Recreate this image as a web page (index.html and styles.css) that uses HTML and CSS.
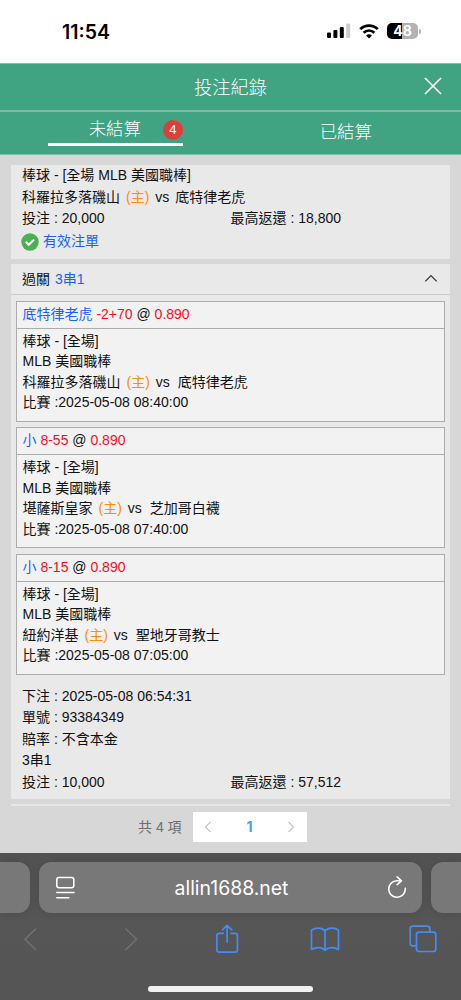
FILE: index.html
```html
<!DOCTYPE html>
<html lang="zh-Hant">
<head>
    <meta charset="UTF-8">
    <meta name="viewport" content="width=device-width, initial-scale=1.0">
    <title>投注紀錄</title>
    <link rel="stylesheet" href="styles.css">
</head>
<body>
    <!-- Phone status bar -->
    <div class="status-bar">
        <span class="clock">11:54</span>
        <div class="status-icons">
            <svg class="signal" width="24" height="16" viewBox="0 0 24 16">
                <rect x="0" y="9.5" width="4" height="5.5" rx="1"/>
                <rect x="6.4" y="7" width="4" height="8" rx="1"/>
                <rect x="12.8" y="4" width="4" height="11" rx="1"/>
                <rect x="19.2" y="0.5" width="4" height="14.5" rx="1" fill="#ccc"/>
            </svg>
            <svg class="wifi" width="20" height="15" viewBox="0 0 20 15">
                <path d="M1.2 5.1a12.7 12.7 0 0 1 17.6 0" fill="none" stroke="#000" stroke-width="2.7"/>
                <path d="M4.6 8.7a7.8 7.8 0 0 1 10.8 0" fill="none" stroke="#000" stroke-width="2.6"/>
                <path d="M10 14.6l-3-3a4.3 4.3 0 0 1 6 0z"/>
            </svg>
            <div class="battery">48</div>
            <span class="battery-cap"></span>
        </div>
    </div>

    <!-- Title -->
    <header class="title-bar">
        <h1>投注紀錄</h1>
        <svg class="close" width="18" height="18" viewBox="0 0 18 18">
            <path d="M1 1l16 16M17 1L1 17" fill="none" stroke="#fff" stroke-width="1.7"/>
        </svg>
    </header>

    <!-- Tabs -->
    <nav class="tabs">
        <div class="tab">
            <div class="tab-active">未結算<span class="badge">4</span></div>
        </div>
        <div class="tab">已結算</div>
    </nav>

    <main class="content">
        <!-- First bet -->
        <section class="card card-first">
            <p class="row">棒球 - [全場 MLB 美國職棒]</p>
            <p class="row">科羅拉多落磯山<span class="home">(主)</span>vs<span class="away">底特律老虎</span></p>
            <div class="row amounts"><span>投注 : 20,000</span><span>最高返還 : 18,800</span></div>
            <div class="row valid">
                <svg width="18" height="18" viewBox="0 0 18 18">
                    <circle cx="9" cy="9" r="8.7" fill="#4caf50"/>
                    <path d="M4.8 8.8l3 3 5.3-5.3" fill="none" stroke="#fff" stroke-width="2"/>
                </svg>
                <span>有效注單</span>
            </div>
        </section>

        <!-- Parlay bet -->
        <section class="card">
            <div class="card-head">
                <span>過關<span class="parlay">3串1</span></span>
                <svg width="14" height="9" viewBox="0 0 14 9">
                    <path d="M1.3 7.3L7 1.5l5.700 5.800" fill="none" stroke="#333" stroke-width="1.2"/>
                </svg>
            </div>
            <div class="legs">
                <article class="leg">
                    <div class="leg-pick"><span class="blue">底特律老虎</span> <span class="red">-2+70</span> @ <span class="red">0.890</span></div>
                    <div class="leg-body">
                        <p>棒球 - [全場]</p>
                        <p>MLB 美國職棒</p>
                        <p>科羅拉多落磯山<span class="home">(主)</span>vs<span class="away">底特律老虎</span></p>
                        <p>比賽 :2025-05-08 08:40:00</p>
                    </div>
                </article>
                <article class="leg">
                    <div class="leg-pick"><span class="blue">小</span> <span class="red">8-55</span> @ <span class="red">0.890</span></div>
                    <div class="leg-body">
                        <p>棒球 - [全場]</p>
                        <p>MLB 美國職棒</p>
                        <p>堪薩斯皇家<span class="home">(主)</span>vs<span class="away">芝加哥白襪</span></p>
                        <p>比賽 :2025-05-08 07:40:00</p>
                    </div>
                </article>
                <article class="leg">
                    <div class="leg-pick"><span class="blue">小</span> <span class="red">8-15</span> @ <span class="red">0.890</span></div>
                    <div class="leg-body">
                        <p>棒球 - [全場]</p>
                        <p>MLB 美國職棒</p>
                        <p>紐約洋基<span class="home">(主)</span>vs<span class="away">聖地牙哥教士</span></p>
                        <p>比賽 :2025-05-08 07:05:00</p>
                    </div>
                </article>
            </div>
            <div class="summary">
                <p class="row">下注 : 2025-05-08 06:54:31</p>
                <p class="row">單號 : 93384349</p>
                <p class="row">賠率 : 不含本金</p>
                <p class="row">3串1</p>
                <div class="row amounts"><span>投注 : 10,000</span><span>最高返還 : 57,512</span></div>
            </div>
        </section>

        <!-- Pagination -->
        <div class="pagination">
            <span class="total">共 4 項</span>
            <div class="pager">
                <svg width="8" height="12" viewBox="0 0 8 12"><path d="M6.5 1L1.5 6l5 5" fill="none" stroke="#c4c6cc" stroke-width="1.2"/></svg>
                <span class="page">1</span>
                <svg width="8" height="12" viewBox="0 0 8 12"><path d="M1.5 1l5 5-5 5" fill="none" stroke="#c4c6cc" stroke-width="1.2"/></svg>
            </div>
        </div>
    </main>

    <!-- Browser bar -->
    <footer class="browser">
        <div class="address-row">
            <div class="side-tab side-left"></div>
            <div class="address">
                <svg width="20" height="24" viewBox="0 0 20 24" fill="none" stroke="#fff" stroke-width="1.6" stroke-linecap="round">
                    <rect x="0.8" y="1.5" width="17" height="10.2" rx="2.2"/>
                    <path d="M.8 16.500h17.200M.8 21.700h12"/>
                </svg>
                <span>allin1688.net</span>
                <svg width="20" height="24" viewBox="0 0 20 24" fill="none" stroke="#fff" stroke-width="1.6" stroke-linecap="round" stroke-linejoin="round">
                    <path d="M18.300 12.400A8.300 8.300 0 1 1 10 4.700H14"/>
                    <path d="M10.200 .9l4.200 3.900-4.200 3.900"/>
                </svg>
            </div>
            <div class="side-tab side-right"></div>
        </div>
        <div class="toolbar">
            <svg width="28" height="30" viewBox="0 0 28 30" fill="none" stroke="#717171" stroke-width="1.6"><path d="M19 4.500L8 15.200 19 26"/></svg>
            <svg width="28" height="30" viewBox="0 0 28 30" fill="none" stroke="#717171" stroke-width="1.6"><path d="M10.500 4.500l11 10.700L10.500 26"/></svg>
            <svg width="28" height="30" viewBox="0 0 28 30" fill="none" stroke="#448cf4" stroke-width="1.7" stroke-linecap="round" stroke-linejoin="round">
                <path d="M11.200 9.300H7.200A2.400 2.400 0 0 0 4.800 11.700V25.700a2.400 2.400 0 0 0 2.400 2.400h15.800a2.400 2.400 0 0 0 2.400-2.400V11.700a2.400 2.400 0 0 0-2.400-2.400H19"/>
                <path d="M15.100 18V1.500M10.400 5.900l4.700-4.500 4.700 4.500"/>
            </svg>
            <svg width="30" height="30" viewBox="0 0 30 30" fill="none" stroke="#448cf4" stroke-width="1.7" stroke-linejoin="round">
                <path d="M15 6.700C12 3.300 5 3.300 1.500 6.200V25.500c4-2.600 10-2.600 13.500.6 3.500-3.200 9.500-3.200 13.500-.6V6.200C25 3.300 18 3.300 15 6.700z"/>
                <path d="M15 6.500v20"/>
            </svg>
            <svg width="28" height="30" viewBox="0 0 28 30" fill="none" stroke="#448cf4" stroke-width="1.7">
                <path d="M7.500 21.800H3.600A2.400 2.400 0 0 1 1.200 19.400V4.600A2.400 2.400 0 0 1 3.600 2.200H18.400A2.400 2.400 0 0 1 20.800 4.600V8"/>
                <rect x="7.500" y="8.200" width="19.300" height="19.300" rx="2.400"/>
            </svg>
        </div>
        <div class="home-indicator"></div>
    </footer>
</body>
</html>
```
FILE: styles.css
```css
* {
    box-sizing: border-box;
}

body {
    margin: 0;
    height: 1000px;
    display: flex;
    flex-direction: column;
    overflow: hidden;
    background-color: #d7d7d7;
    color: #111;
    font-family: "Liberation Sans", "Noto Sans CJK TC", sans-serif;
    font-size: 14px;
}

p, h1 {
    margin: 0;
}

svg {
    display: block;
    flex: none;
}

/* Status bar */
.status-bar {
    height: 63px;
    flex: none;
    display: flex;
    justify-content: space-between;
    align-items: center;
    padding: 0 40px 0 62px;
    background-color: #fff;
}

.clock {
    font-family: Inter, sans-serif;
    font-size: 19.5px;
    font-weight: 600;
    color: #000;
}

.status-icons {
    display: flex;
    align-items: center;
    padding-bottom: 1px;
}

.wifi {
    margin-left: 8px;
}

.battery {
    width: 31px;
    height: 16px;
    margin-left: 8px;
    border-radius: 5px;
    background: linear-gradient(to right, #000 48%, #b3b3b3 48%);
    color: #fff;
    font-family: Inter, sans-serif;
    font-size: 14px;
    font-weight: 700;
    line-height: 16px;
    text-align: center;
}

.battery-cap {
    width: 2px;
    height: 5px;
    margin-left: 1px;
    border-radius: 0 2px 2px 0;
    background-color: #b3b3b3;
}

/* Title */
.title-bar {
    position: relative;
    height: 49px;
    flex: none;
    display: flex;
    justify-content: center;
    align-items: center;
    padding-bottom: 2px;
    border-top: 1px solid #8dbfac;
    border-bottom: 2px solid #83b9a5;
    background-color: #40a382;
}

.title-bar h1 {
    color: #fff;
    font-size: 18.2px;
    font-weight: 300;
}

.close {
    position: absolute;
    right: 19px;
    top: 13px;
}

/* Tabs */
.tabs {
    height: 43px;
    flex: none;
    display: flex;
    border-bottom: 1px solid #83bda7;
    background-color: #40a382;
    color: #fff;
    font-size: 17.4px;
    font-weight: 300;
}

.tab {
    flex: 1;
    display: flex;
    justify-content: center;
    line-height: 40px;
}

.tab-active {
    position: relative;
    width: 135px;
    height: 34px;
    padding-right: 1px;
    border-bottom: 3px solid #fff;
    line-height: 34px;
    text-align: center;
}

.badge {
    position: absolute;
    right: 0;
    top: 8px;
    width: 20px;
    height: 20px;
    border-radius: 50%;
    background-color: #db403b;
    font-size: 13px;
    line-height: 20px;
}

/* Bets */
.content {
    flex: none;
    height: 698px;
    padding: 10px 11px 0;
}

.card {
    background-color: #e9e9e9;
}

.card-first {
    height: 94px;
    margin-bottom: 5px;
    padding: 0 11px;
}

.row {
    height: 21.5px;
    line-height: 21.5px;
    white-space: nowrap;
}

.home {
    margin: 0 6px;
    color: #ff8c0a;
}

.away {
    margin-left: 6px;
}

.leg .away {
    margin-left: 8px;
}

.amounts {
    display: grid;
    grid-template-columns: 1fr 1fr;
}

.valid {
    display: flex;
    align-items: center;
    gap: 4px;
    height: 24px;
    margin-left: -1px;
    color: #1763f5;
}

.card-head {
    height: 31px;
    display: flex;
    justify-content: space-between;
    align-items: center;
    padding: 0 12px 2px 11px;
    border-bottom: 1px solid #cacaca;
}

.parlay {
    margin-left: 5px;
    color: #1763f5;
}

.legs {
    display: flex;
    flex-direction: column;
    gap: 5.5px;
    padding: 5.5px 5px 0;
}

.leg {
    height: 121px;
    border: 1px solid #acacac;
    background-color: #f2f2f2;
}

.leg-pick {
    height: 27px;
    padding-left: 5.5px;
    border-bottom: 1px solid #acacac;
    line-height: 25px;
}

.leg-body {
    padding: 2px 5.5px 0;
    line-height: 20.5px;
}

.leg-body p {
    height: 20.5px;
    white-space: nowrap;
}

.blue {
    color: #1763f5;
}

.red {
    color: #fc0d1b;
}

.summary {
    height: 124px;
    padding: 11px 11px 0;
}

/* Pagination */
.pagination {
    margin-top: 5px;
    display: flex;
    padding: 6px 0 0 127px;
    border-top: 2px solid #e6e6e6;
}

.total {
    width: 55px;
    color: #6c6e72;
    line-height: 30px;
}

.pager {
    width: 114px;
    height: 30px;
    display: flex;
    justify-content: space-between;
    align-items: center;
    padding: 0 12px 0 11px;
    background-color: #fff;
}

.page {
    color: #409eff;
    font-family: Inter, sans-serif;
    font-weight: 700;
}

/* Browser bar */
.browser {
    flex: 1;
    padding-top: 9px;
    background: linear-gradient(#525252, #565656 50px, #555);
}

.address-row {
    display: flex;
    justify-content: space-between;
}

.side-tab {
    width: 30px;
    height: 51px;
    background-color: #787878;
    box-shadow: 0 0 8px rgba(0, 0, 0, 0.15);
}

.side-left {
    border-radius: 0 12px 12px 0;
}

.side-right {
    border-radius: 12px 0 0 12px;
}

.address {
    width: 383px;
    height: 51px;
    display: flex;
    justify-content: space-between;
    align-items: center;
    padding: 0 15px 0 17px;
    border-radius: 12px;
    background-color: #787878;
    box-shadow: 0 0 8px rgba(0, 0, 0, 0.15);
    color: #fff;
    font-family: Inter, sans-serif;
    font-size: 19.4px;
}

.toolbar {
    display: flex;
    justify-content: space-between;
    padding: 11px 24px 0 17px;
}

.home-indicator {
    width: 165px;
    height: 6px;
    margin: 32px auto 0;
    border-radius: 3px;
    background-color: #f1f1f1;
}
```
